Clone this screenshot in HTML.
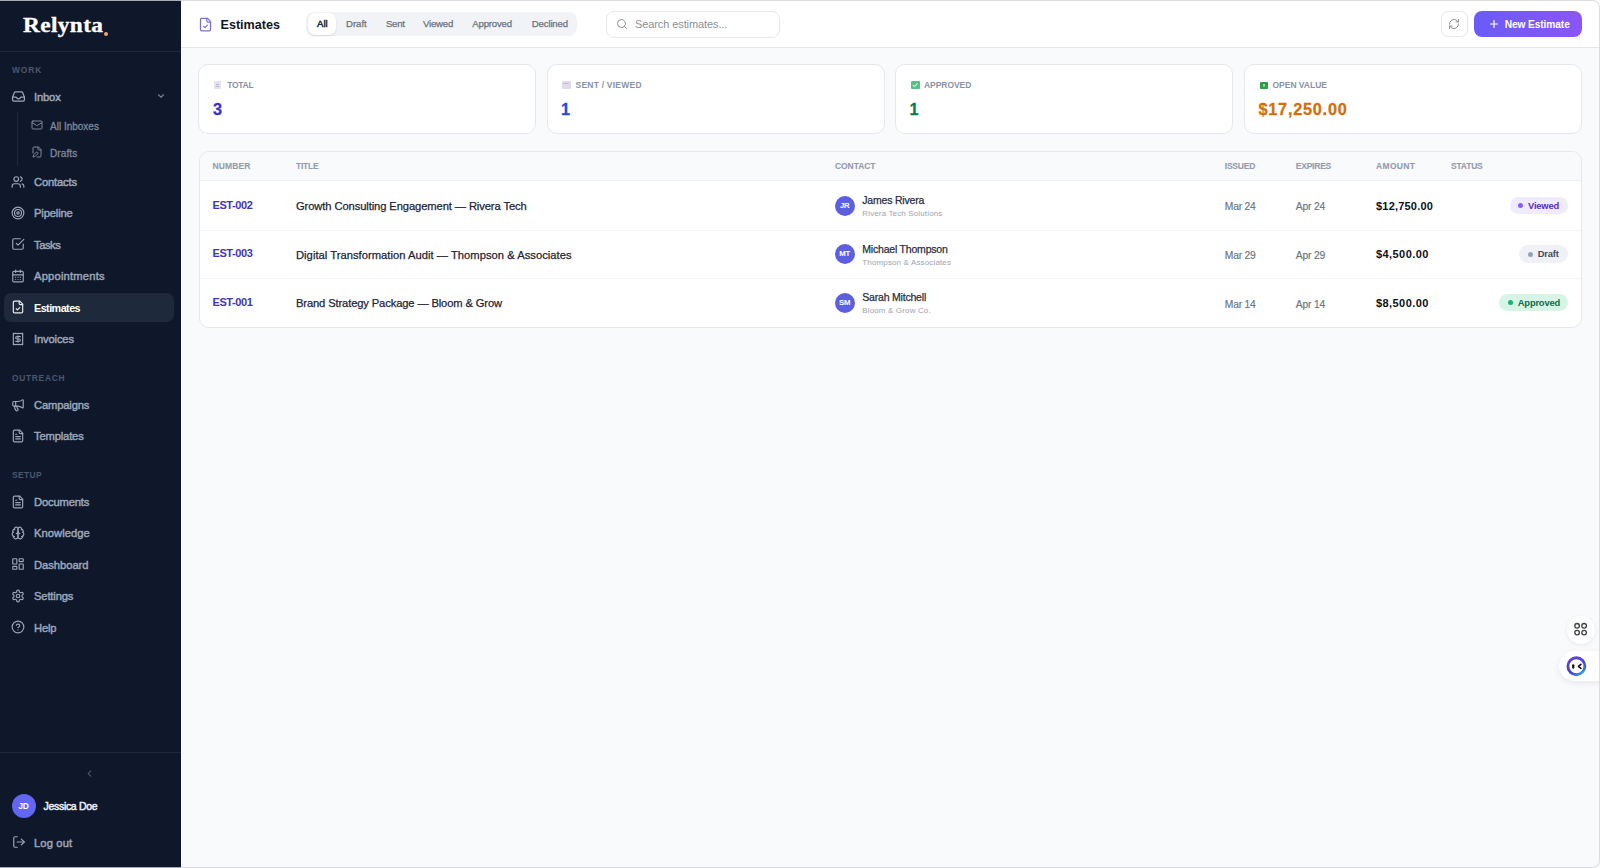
<!DOCTYPE html>
<html><head><meta charset="utf-8">
<style>
*{margin:0;padding:0;box-sizing:border-box}
html,body{width:1600px;height:868px;overflow:hidden;background:#f8fafc;font-family:"Liberation Sans",sans-serif}
.a{position:absolute}
.t{position:absolute;white-space:nowrap;line-height:1}
svg{position:absolute;fill:none;stroke:currentColor;stroke-linecap:round;stroke-linejoin:round}
#sb{position:absolute;left:0;top:0;width:181px;height:868px;background:#0f172a}
.nav{color:#9ba6b9;font-size:11.2px;letter-spacing:-0.15px;-webkit-text-stroke:0.45px currentColor}
.card{background:#fff;border:1px solid #e5e7eb;border-radius:10px}
.lbl{position:absolute;top:81.2px;font-size:8.5px;font-weight:bold;color:#8a93a3;letter-spacing:-0.3px;line-height:1;white-space:nowrap}
.ico{position:absolute;top:81px;width:7px;height:8px;border-radius:1px}
.ico i{position:absolute;display:block}
.val{position:absolute;top:101px;font-size:16.3px;font-weight:bold;line-height:1;white-space:nowrap;-webkit-text-stroke:0.3px currentColor}
.th{position:absolute;top:162.0px;font-size:8.5px;font-weight:bold;color:#949cab;letter-spacing:-0.1px;-webkit-text-stroke:0.1px #949cab;line-height:1;white-space:nowrap}
.num{font-size:11px;font-weight:bold;color:#3f35b5;letter-spacing:-0.4px}
.ttl{font-size:11.2px;color:#1f2433;letter-spacing:-0.1px;-webkit-text-stroke:0.25px #1f2433}
.av{width:20px;height:20px;border-radius:50%;background:#5b5fe0;color:#fff;font-size:7.8px;font-weight:bold;text-align:center;line-height:20px;letter-spacing:-0.3px}
.nm{font-size:10.5px;color:#2a2f3c;letter-spacing:-0.2px;-webkit-text-stroke:0.25px #2a2f3c}
.sub{font-size:8px;color:#9ca3af;letter-spacing:0.14px}
.dt{font-size:10.3px;color:#6b7280;letter-spacing:-0.2px;-webkit-text-stroke:0.15px #6b7280}
.amt{font-size:11px;font-weight:bold;color:#0b1020;letter-spacing:0.2px}
.bdg{height:17.3px;border-radius:9px;font-size:9.4px;font-weight:bold;line-height:17.3px;padding-left:18.5px;white-space:nowrap;letter-spacing:-0.2px}
.bdg i{position:absolute;left:8.5px;top:6.3px;width:5px;height:5px;border-radius:50%}
.sec{color:#4d586e;font-size:8.4px;font-weight:bold;letter-spacing:0.72px}
</style></head>
<body>
<div id="sb">

<div class="t" style="left:23.2px;top:14.6px;font-family:'Liberation Serif',serif;font-weight:bold;font-size:21px;color:#fff;letter-spacing:0.35px;-webkit-text-stroke:0.3px #fff;transform:scaleX(1.11);transform-origin:0 0">Relynta</div>
<div class="a" style="left:103.5px;top:32px;width:4px;height:4px;border-radius:50%;background:#f0a36b"></div>
<div class="a" style="left:0;top:51px;width:181px;height:1px;background:#1e293b"></div>

<div class="t sec" style="left:12px;top:65.6px;letter-spacing:0.95px">WORK</div>
<div class="t sec" style="left:12px;top:374.1px">OUTREACH</div>
<div class="t sec" style="left:12px;top:471.1px;letter-spacing:0.4px">SETUP</div>
<div class="nav">
<svg style="left:11px;top:88.7px;" width="15" height="15" viewBox="0 0 24 24" stroke-width="2"><path d="M2.5 13h5c.8 0 1.3.5 1.7 1.1.6.9 1.5 1.6 2.8 1.6s2.2-.7 2.8-1.6c.4-.6.9-1.1 1.7-1.1h5"/><path d="M5.3 5.9A2.2 2.2 0 0 1 7.2 4.7h9.6a2.2 2.2 0 0 1 1.9 1.2L21.5 13v4.2a2.2 2.2 0 0 1-2.2 2.2H4.7a2.2 2.2 0 0 1-2.2-2.2V13z"/></svg>
<div class="t" style="left:34px;top:91.53px">Inbox</div>
<svg style="left:155.9px;top:91px;color:#7a8396" width="10" height="10" viewBox="0 0 24 24" stroke-width="2.6"><path d="m6 9 6 6 6-6"/></svg>
<div class="a" style="left:17px;top:112px;width:1px;height:54px;background:#1e293b"></div>
<svg style="left:30.5px;top:119.3px;color:#7d889b;" width="12" height="12" viewBox="0 0 24 24" stroke-width="2"><rect width="20" height="16" x="2" y="4" rx="2"/><path d="m22 7-8.97 5.7a1.94 1.94 0 0 1-2.06 0L2 7"/></svg>
<div class="t" style="left:50px;top:121.8px;font-size:10px;color:#7d889b;letter-spacing:0;-webkit-text-stroke:0.3px #7d889b">All Inboxes</div>
<svg style="left:30.8px;top:146.2px;color:#7d889b;" width="12" height="12" viewBox="0 0 24 24" stroke-width="2"><path d="M12 22h6a2 2 0 0 0 2-2V7l-5-5H6a2 2 0 0 0-2 2v10"/><path d="M14 2v4a2 2 0 0 0 2 2h4"/><path d="M10.4 12.6a2 2 0 1 1 3 3L8 21l-4 1 1-4Z"/></svg>
<div class="t" style="left:50px;top:148.8px;font-size:10px;color:#7d889b;letter-spacing:0.1px;-webkit-text-stroke:0.3px #7d889b">Drafts</div>
<svg style="left:11.4px;top:174.5px;" width="14" height="14" viewBox="0 0 24 24" stroke-width="2"><path d="M16 21v-2a4 4 0 0 0-4-4H6a4 4 0 0 0-4 4v2"/><circle cx="9" cy="7" r="4"/><path d="M22 21v-2a4 4 0 0 0-3-3.87"/><path d="M16 3.13a4 4 0 0 1 0 7.75"/></svg>
<div class="t" style="left:34px;top:177.03px">Contacts</div>
<svg style="left:11.4px;top:205.79999999999998px;" width="14" height="14" viewBox="0 0 24 24" stroke-width="2"><circle cx="12" cy="12" r="10"/><circle cx="12" cy="12" r="6"/><circle cx="12" cy="12" r="2"/></svg>
<div class="t" style="left:34px;top:208.33px">Pipeline</div>
<svg style="left:11.4px;top:237.4px;" width="14" height="14" viewBox="0 0 24 24" stroke-width="2"><path d="m9 11 3 3L22 4"/><path d="M21 12v7a2 2 0 0 1-2 2H5a2 2 0 0 1-2-2V5a2 2 0 0 1 2-2h11"/></svg>
<div class="t" style="left:34px;top:239.93px;letter-spacing:-0.45px">Tasks</div>
<svg style="left:11.4px;top:268.70000000000005px;" width="14" height="14" viewBox="0 0 24 24" stroke-width="2"><path d="M8 2v4"/><path d="M16 2v4"/><rect width="18" height="18" x="3" y="4" rx="2"/><path d="M3 10h18"/><path d="M8 14h.01"/><path d="M12 14h.01"/><path d="M16 14h.01"/><path d="M8 18h.01"/><path d="M12 18h.01"/><path d="M16 18h.01"/></svg>
<div class="t" style="left:34px;top:271.23px;letter-spacing:0.2px">Appointments</div>
<div class="a" style="left:4px;top:292.5px;width:170px;height:29px;border-radius:7px;background:#1e293b"></div>
<svg style="left:11.4px;top:300.1px;color:#e9ecf2;" width="14" height="14" viewBox="0 0 24 24" stroke-width="2"><path d="M15 2H6a2 2 0 0 0-2 2v16a2 2 0 0 0 2 2h12a2 2 0 0 0 2-2V7Z"/><path d="M14 2v4a2 2 0 0 0 2 2h4"/><path d="m9 15 2 2 4-4"/></svg>
<div class="t" style="left:34px;top:302.82px;color:#fff;font-weight:bold;font-size:10.8px;-webkit-text-stroke:0;letter-spacing:-0.55px">Estimates</div>
<svg style="left:11.4px;top:331.6px;" width="14" height="14" viewBox="0 0 24 24" stroke-width="2"><path d="M4 2v20l2-1 2 1 2-1 2 1 2-1 2 1 2-1 2 1V2l-2 1-2-1-2 1-2-1-2 1-2-1-2 1Z"/><path d="M16 8h-6a2 2 0 1 0 0 4h4a2 2 0 1 1 0 4H8"/><path d="M12 17.5v-11"/></svg>
<div class="t" style="left:34px;top:334.13px">Invoices</div>
<svg style="left:11.4px;top:397.5px;" width="14" height="14" viewBox="0 0 24 24" stroke-width="2"><path d="M11 6a13 13 0 0 0 8.4-2.8A1 1 0 0 1 21 4v12a1 1 0 0 1-1.6.8A13 13 0 0 0 11 14H5a2 2 0 0 1-2-2V8a2 2 0 0 1 2-2z"/><path d="M6 14a12 12 0 0 0 2.4 7.2 2 2 0 0 0 3.2-2.4A8 8 0 0 1 10 14"/><path d="M8 6v8"/></svg>
<div class="t" style="left:34px;top:400.03px">Campaigns</div>
<svg style="left:11.4px;top:428.6px;" width="14" height="14" viewBox="0 0 24 24" stroke-width="2"><path d="M15 2H6a2 2 0 0 0-2 2v16a2 2 0 0 0 2 2h12a2 2 0 0 0 2-2V7Z"/><path d="M14 2v4a2 2 0 0 0 2 2h4"/><path d="M10 9H8"/><path d="M16 13H8"/><path d="M16 17H8"/></svg>
<div class="t" style="left:34px;top:431.13px">Templates</div>
<svg style="left:11.4px;top:494.6px;" width="14" height="14" viewBox="0 0 24 24" stroke-width="2"><path d="M15 2H6a2 2 0 0 0-2 2v16a2 2 0 0 0 2 2h12a2 2 0 0 0 2-2V7Z"/><path d="M14 2v4a2 2 0 0 0 2 2h4"/><path d="M10 9H8"/><path d="M16 13H8"/><path d="M16 17H8"/></svg>
<div class="t" style="left:34px;top:497.13px">Documents</div>
<svg style="left:11.4px;top:525.5px;" width="14" height="14" viewBox="0 0 24 24" stroke-width="2"><path d="M12 5a3 3 0 1 0-5.997.125 4 4 0 0 0-2.526 5.77 4 4 0 0 0 .556 6.588A4 4 0 1 0 12 18Z"/><path d="M12 5a3 3 0 1 1 5.997.125 4 4 0 0 1 2.526 5.77 4 4 0 0 1-.556 6.588A4 4 0 1 1 12 18Z"/><path d="M15 13a4.5 4.5 0 0 1-3-4 4.5 4.5 0 0 1-3 4"/><path d="M17.599 6.5a3 3 0 0 0 .399-1.375"/><path d="M6.003 5.125A3 3 0 0 0 6.401 6.5"/><path d="M3.477 10.896a4 4 0 0 1 .585-.396"/><path d="M19.938 10.5a4 4 0 0 1 .585.396"/><path d="M6 18a4 4 0 0 1-1.967-.516"/><path d="M19.967 17.484A4 4 0 0 1 18 18"/></svg>
<div class="t" style="left:34px;top:528.03px;letter-spacing:0.05px">Knowledge</div>
<svg style="left:11.4px;top:557.2px;" width="14" height="14" viewBox="0 0 24 24" stroke-width="2"><rect width="7" height="9" x="3" y="3" rx="1"/><rect width="7" height="5" x="14" y="3" rx="1"/><rect width="7" height="9" x="14" y="12" rx="1"/><rect width="7" height="5" x="3" y="16" rx="1"/></svg>
<div class="t" style="left:34px;top:559.73px;letter-spacing:-0.03px">Dashboard</div>
<svg style="left:11.4px;top:588.6px;" width="14" height="14" viewBox="0 0 24 24" stroke-width="2"><path d="M12.22 2h-.44a2 2 0 0 0-2 2v.18a2 2 0 0 1-1 1.73l-.43.25a2 2 0 0 1-2 0l-.15-.08a2 2 0 0 0-2.73.73l-.22.38a2 2 0 0 0 .73 2.73l.15.1a2 2 0 0 1 1 1.72v.51a2 2 0 0 1-1 1.74l-.15.09a2 2 0 0 0-.73 2.73l.22.38a2 2 0 0 0 2.73.73l.15-.08a2 2 0 0 1 2 0l.43.25a2 2 0 0 1 1 1.73V20a2 2 0 0 0 2 2h.44a2 2 0 0 0 2-2v-.18a2 2 0 0 1 1-1.73l.43-.25a2 2 0 0 1 2 0l.15.08a2 2 0 0 0 2.73-.73l.22-.39a2 2 0 0 0-.73-2.73l-.15-.08a2 2 0 0 1-1-1.74v-.5a2 2 0 0 1 1-1.74l.15-.09a2 2 0 0 0 .73-2.73l-.22-.38a2 2 0 0 0-2.73-.73l-.15.08a2 2 0 0 1-2 0l-.43-.25a2 2 0 0 1-1-1.73V4a2 2 0 0 0-2-2z"/><circle cx="12" cy="12" r="3"/></svg>
<div class="t" style="left:34px;top:591.13px">Settings</div>
<svg style="left:11.4px;top:620.4px;" width="14" height="14" viewBox="0 0 24 24" stroke-width="2"><circle cx="12" cy="12" r="10"/><path d="M9.09 9a3 3 0 0 1 5.83 1c0 2-3 3-3 3"/><path d="M12 17h.01"/></svg>
<div class="t" style="left:34px;top:622.93px">Help</div>
</div>
<div class="a" style="left:0;top:752px;width:181px;height:1px;background:#1e293b"></div>
<svg style="left:83.5px;top:767.5px;color:#58627a" width="11" height="11" viewBox="0 0 24 24" stroke-width="2.3"><path d="m15 18-6-6 6-6"/></svg>
<div class="a" style="left:11.5px;top:794px;width:24px;height:24px;border-radius:50%;background:#6366f1"></div>
<div class="t" style="left:11.5px;top:802px;width:24px;text-align:center;color:#fff;font-size:8.5px;font-weight:bold;letter-spacing:-0.3px">JD</div>
<div class="t" style="left:43.5px;top:800.6px;color:#e8ecf2;font-size:10.5px;letter-spacing:-0.3px;-webkit-text-stroke:0.5px #e8ecf2">Jessica Doe</div>
<div class="nav">
<svg style="left:11.5px;top:834.8px;" width="14" height="14" viewBox="0 0 24 24" stroke-width="2"><path d="M9 21H5a2 2 0 0 1-2-2V5a2 2 0 0 1 2-2h4"/><path d="m16 17 5-5-5-5"/><path d="M21 12H9"/></svg>
<div class="t" style="left:34px;top:838.43px;letter-spacing:0.15px">Log out</div>
</div></div>
<!-- main -->
<div class="a" style="left:181px;top:0;width:1419px;height:48px;background:#fff;border-bottom:1px solid #e5e7eb"></div>
<svg style="left:198.3px;top:17.1px;color:#7b6fdc" width="15" height="15" viewBox="0 0 24 24" stroke-width="2"><path d="M15 2H6a2 2 0 0 0-2 2v16a2 2 0 0 0 2 2h12a2 2 0 0 0 2-2V7Z"/><path d="M14 2v4a2 2 0 0 0 2 2h4"/><path d="m9 15 2 2 4-4"/></svg>
<div class="t" style="left:220.5px;top:18.5px;font-size:12.6px;font-weight:bold;color:#111827">Estimates</div>

<div class="a" style="left:306px;top:12px;width:271px;height:23.5px;border-radius:8px;background:#f1f3f7"></div>
<div class="a" style="left:307.5px;top:13px;width:28.5px;height:21.5px;border-radius:7px;background:#fff;box-shadow:0 1px 2px rgba(0,0,0,.12)"></div>
<div class="tabs" style="font-size:9.6px;color:#6b7280;-webkit-text-stroke:0.25px #6b7280">
  <div class="t" style="left:317px;top:18.7px;color:#1f2937;font-size:9.6px;-webkit-text-stroke:0.5px #1f2937">All</div>
  <div class="t" style="left:346px;top:18.7px">Draft</div>
  <div class="t" style="left:386px;top:18.7px;letter-spacing:-0.3px">Sent</div>
  <div class="t" style="left:423px;top:18.7px;letter-spacing:-0.2px">Viewed</div>
  <div class="t" style="left:472.3px;top:18.7px;letter-spacing:-0.2px">Approved</div>
  <div class="t" style="left:531.8px;top:18.7px;letter-spacing:-0.15px">Declined</div>
</div>

<div class="a" style="left:605.5px;top:11px;width:174px;height:26.5px;border-radius:8px;background:#fff;border:1px solid #e5e7eb"></div>
<svg style="left:616px;top:18px;color:#8b9099" width="12" height="12" viewBox="0 0 24 24" stroke-width="2"><circle cx="11" cy="11" r="8"/><path d="m21 21-4.3-4.3"/></svg>
<div class="t" style="left:635px;top:18.8px;font-size:11px;color:#8b9099;letter-spacing:-0.1px">Search estimates...</div>

<div class="a" style="left:1441px;top:11px;width:26.5px;height:26px;border-radius:7px;background:#fff;border:1px solid #e5e7eb"></div>
<svg style="left:1448px;top:17.6px;color:#85888f" width="12" height="12" viewBox="0 0 24 24" stroke-width="1.9"><path d="M3 12a9 9 0 0 1 9-9 9.75 9.75 0 0 1 6.74 2.74L21 8"/><path d="M21 3v5h-5"/><path d="M21 12a9 9 0 0 1-9 9 9.75 9.75 0 0 1-6.74-2.74L3 16"/><path d="M8 16H3v5"/></svg>
<div class="a" style="left:1474px;top:11px;width:108px;height:26px;border-radius:8px;background:linear-gradient(90deg,#6a5cf6,#8b55f6)"></div>
<svg style="left:1487.8px;top:17.8px;color:#fff" width="12" height="12" viewBox="0 0 24 24" stroke-width="2.4"><path d="M5 12h14"/><path d="M12 5v14"/></svg>
<div class="t" style="left:1504.7px;top:20px;font-size:10.2px;font-weight:bold;color:#fff;letter-spacing:-0.1px">New Estimate</div>

<!-- cards -->
<div class="card a" style="left:198px;top:64px;width:338px;height:69.5px"></div>
<div class="card a" style="left:547px;top:64px;width:338px;height:69.5px"></div>
<div class="card a" style="left:895px;top:64px;width:338px;height:69.5px"></div>
<div class="card a" style="left:1244px;top:64px;width:338px;height:69.5px"></div>


<!-- table -->
<div class="a" style="left:198.5px;top:151px;width:1383px;height:177px;background:#fff;border:1px solid #e5e7eb;border-radius:10px;overflow:hidden">
  <div class="a" style="left:0;top:0;width:100%;height:29px;background:#f8fafc;border-bottom:1px solid #eef0f4"></div>
  <div class="a" style="left:0;top:77.5px;width:100%;height:1px;background:#f3f4f7"></div>
  <div class="a" style="left:0;top:126px;width:100%;height:1px;background:#f3f4f7"></div>
</div>
<div class="th" style="left:212.5px;letter-spacing:0.1px">NUMBER</div>
<div class="th" style="left:296px;letter-spacing:-0.25px">TITLE</div>
<div class="th" style="left:835px;letter-spacing:-0.08px">CONTACT</div>
<div class="th" style="left:1224.8px;letter-spacing:-0.23px">ISSUED</div>
<div class="th" style="left:1295.8px;letter-spacing:-0.23px">EXPIRES</div>
<div class="th" style="left:1376px;letter-spacing:0.34px">AMOUNT</div>
<div class="th" style="left:1451px;letter-spacing:-0.2px">STATUS</div>

<div class="t num" style="left:212.5px;top:199.8px">EST-002</div>
<div class="t ttl" style="left:296px;top:201.1px">Growth Consulting Engagement — Rivera Tech</div>
<div class="a av" style="left:834.6px;top:195.8px">JR</div>
<div class="t nm" style="left:862.3px;top:195.0px">James Rivera</div>
<div class="t sub" style="left:862.3px;top:210.0px">Rivera Tech Solutions</div>
<div class="t dt" style="left:1224.8px;top:202.3px">Mar 24</div>
<div class="t dt" style="left:1295.8px;top:202.3px">Apr 24</div>
<div class="t amt" style="left:1376px;top:200.5px">$12,750.00</div>
<div class="a bdg" style="left:1509.5px;top:196.7px;width:58.5px;background:#efeafd;color:#5b2cba"><i style="background:#8b5cf6"></i>Viewed</div>

<div class="t num" style="left:212.5px;top:248.4px">EST-003</div>
<div class="t ttl" style="left:296px;top:249.7px;letter-spacing:0.03px">Digital Transformation Audit — Thompson &amp; Associates</div>
<div class="a av" style="left:834.6px;top:244.4px">MT</div>
<div class="t nm" style="left:862.3px;top:243.6px">Michael Thompson</div>
<div class="t sub" style="left:862.3px;top:258.6px">Thompson &amp; Associates</div>
<div class="t dt" style="left:1224.8px;top:250.9px">Mar 29</div>
<div class="t dt" style="left:1295.8px;top:250.9px">Apr 29</div>
<div class="t amt" style="left:1376px;top:249.1px;letter-spacing:0.42px">$4,500.00</div>
<div class="a bdg" style="left:1519.2px;top:245.3px;width:48.8px;background:#eff1f6;color:#434c5c"><i style="background:#94a3b8"></i>Draft</div>

<div class="t num" style="left:212.5px;top:297.0px">EST-001</div>
<div class="t ttl" style="left:296px;top:298.3px;letter-spacing:-0.13px">Brand Strategy Package — Bloom &amp; Grow</div>
<div class="a av" style="left:834.6px;top:293.0px">SM</div>
<div class="t nm" style="left:862.3px;top:292.2px">Sarah Mitchell</div>
<div class="t sub" style="left:862.3px;top:307.2px">Bloom &amp; Grow Co.</div>
<div class="t dt" style="left:1224.8px;top:299.5px">Mar 14</div>
<div class="t dt" style="left:1295.8px;top:299.5px">Apr 14</div>
<div class="t amt" style="left:1376px;top:297.7px;letter-spacing:0.42px">$8,500.00</div>
<div class="a bdg" style="left:1499.3px;top:293.9px;width:68.7px;background:#d6f5e7;color:#106b4b"><i style="background:#16b377"></i>Approved</div>

<!-- card content -->
<div class="lbl" style="left:227.3px">TOTAL</div>
<div class="ico" style="left:214px;background:#e4e1ee"><i style="left:2px;top:3px;width:3px;height:1px;background:#bdb6d2"></i><i style="left:2px;top:5px;width:3px;height:1px;background:#bdb6d2"></i></div>
<div class="val" style="left:213px;color:#4030c8">3</div>

<div class="lbl" style="left:575.5px;letter-spacing:0.23px">SENT / VIEWED</div>
<div class="ico" style="left:562px;width:8.5px;background:#e3dbea"><i style="left:1px;top:2px;width:6px;height:1px;background:#c7b7d6"></i></div>
<div class="val" style="left:561px;color:#1d4fcf">1</div>

<div class="lbl" style="left:924px;letter-spacing:-0.05px">APPROVED</div>
<div class="ico" style="left:911px;width:8.5px;height:8.5px;top:80.5px;background:#5bbd88;border-radius:1px"><svg style="left:1px;top:1px;color:#b8f7d4" width="6.5" height="6.5" viewBox="0 0 24 24" stroke-width="4"><path d="M4 12l5 5L20 6"/></svg></div>
<div class="val" style="left:909.5px;color:#0e7a4f">1</div>

<div class="lbl" style="left:1272.5px;letter-spacing:-0.02px">OPEN VALUE</div>
<div class="ico" style="left:1259.5px;width:8.5px;height:6.5px;top:82px;background:#2f9e44;border-radius:1px"><i style="left:3px;top:1.5px;width:2.5px;height:3.5px;background:#8fd19e"></i></div>
<div class="val" style="left:1258.5px;color:#d1700f;letter-spacing:0.75px">$17,250.00</div>

<!-- floating widgets -->
<div class="a" style="left:1566.5px;top:616px;width:28px;height:28px;border-radius:50%;background:#fff;box-shadow:0 1px 4px rgba(0,0,0,.08)"></div>
<svg style="left:1572px;top:621px;color:#3f434a" width="17" height="17" viewBox="0 0 17 17" stroke-width="1.35"><circle cx="5.1" cy="4.8" r="2.3"/><circle cx="12.1" cy="4.8" r="2.3"/><circle cx="5.1" cy="11.6" r="2.3"/><circle cx="12.1" cy="11.6" r="2.3"/></svg>
<div class="a" style="left:1559px;top:651px;width:60px;height:30px;border-radius:15px;background:#fff;box-shadow:0 2px 6px rgba(0,0,0,.08)"></div>
<svg style="left:1566px;top:656px" width="21" height="21" viewBox="0 0 21 21"><defs><linearGradient id="rg" x1="0.1" y1="0" x2="0.9" y2="1"><stop offset="0" stop-color="#6140d2"/><stop offset=".55" stop-color="#4c44d4"/><stop offset=".82" stop-color="#3f74cf"/><stop offset="1" stop-color="#3fd4f2"/></linearGradient></defs><circle cx="10.4" cy="10.3" r="8.5" stroke="url(#rg)" stroke-width="2.9" fill="#fff"/><rect x="6.1" y="8.2" width="2.3" height="4.5" rx="1.1" fill="#111" stroke="none"/><path d="M14.9 8.3 12.5 10.3 14.9 12.3" stroke="#111" stroke-width="1.7"/></svg>

<!-- frame -->
<div class="a" style="left:-2px;top:0;width:1602px;height:868px;border:1px solid rgba(211,212,216,.79);border-left:none;border-radius:0 7px 7px 0;box-shadow:0 0 0 12px #fff;pointer-events:none"></div>

</body></html>
